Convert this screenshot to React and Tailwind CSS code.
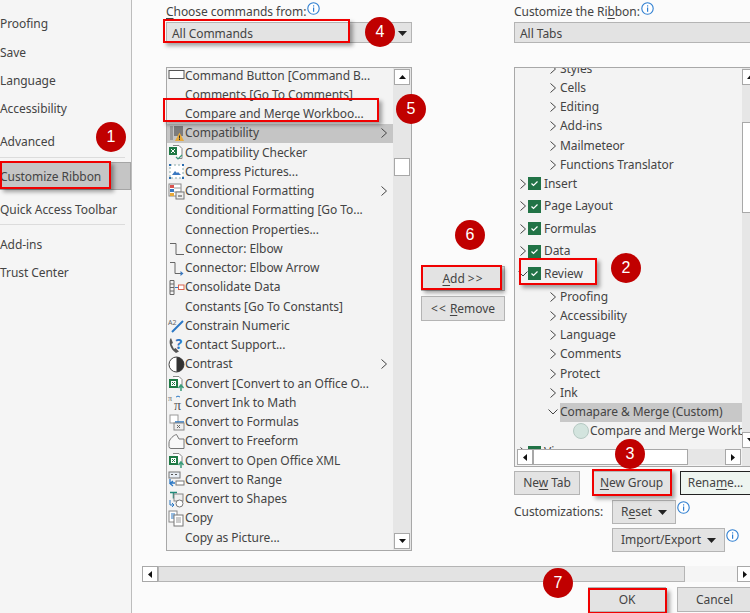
import React from "react";

const font = { fontFamily: '"Noto Sans", "Open Sans", sans-serif' };

const U = ({ children }) => <span className="underline underline-offset-2">{children}</span>;

const Ic = ({ children }) => (
  <svg width="17" height="17" viewBox="0 0 17 17" fill="none" className="shrink-0 overflow-visible">{children}</svg>
);

const icons = {
  button: <Ic><rect x="1" y="3.500" width="15" height="8" fill="#fff" stroke="#555" /></Ic>,
  compat: <Ic><rect x="2" y="1" width="3" height="14" fill="#9a9a9a" /><rect x="6" y="1" width="9" height="10" fill="#7c7c7c" /><path d="M11.500 7.500l4.500 8.500H7z" fill="#e8a93a" /><rect x="11" y="10.500" width="1" height="3" fill="#333" /><rect x="11" y="14" width="1" height="1" fill="#333" /></Ic>,
  checker: <Ic><path d="M5 1.500h6l3 3v10h-3" stroke="#888" fill="#fff" /><rect x="1" y="3" width="8" height="8" fill="#1f7a45" /><path d="M3 5l4 4M7 5l-4 4" stroke="#fff" /><path d="M8 13l2 2 4-4" stroke="#3a9a78" strokeWidth="1.200" /></Ic>,
  compress: <Ic><rect x="2" y="2" width="13" height="13" fill="#fff" stroke="#8aa" strokeDasharray="2 2" /><path d="M4 12l3-4 2 2 1-1 3 3z" fill="#3a78c0" /><rect x="1" y="1" width="2" height="2" fill="#2b6cb0" /><rect x="14" y="1" width="2" height="2" fill="#2b6cb0" /><rect x="1" y="14" width="2" height="2" fill="#2b6cb0" /><rect x="14" y="14" width="2" height="2" fill="#2b6cb0" /></Ic>,
  cond: <Ic><rect x="1" y="1" width="12" height="12" fill="#fff" stroke="#888" /><rect x="2" y="2" width="4" height="3" fill="#d9534f" /><rect x="2" y="6" width="4" height="3" fill="#3a78c0" /><rect x="2" y="10" width="4" height="3" fill="#e8a93a" /><path d="M6 5h7M6 9h7" stroke="#999" /><rect x="8" y="9" width="8" height="7" fill="#eee" stroke="#777" /><path d="M10 13h4" stroke="#444" /></Ic>,
  elbow: <Ic><path d="M2 3.500h6v11h8" stroke="#666" /></Ic>,
  elbowArrow: <Ic><path d="M2 2.500h5v11h7" stroke="#666" /><path d="M12.500 11l3 2.500-3 2.500z" fill="#3a78c0" /></Ic>,
  consol: <Ic><path d="M2 1.500h4v14h-4zM2 5h4M2 8.500h4M2 12h4" stroke="#666" /><path d="M7 8.500h3" stroke="#3a78c0" /><rect x="10.500" y="6" width="5.500" height="4.500" fill="#fff" stroke="#d9634f" /></Ic>,
  numeric: <Ic><text x="0" y="8" fontSize="7" fill="#666" style={font}>A2</text><path d="M4 15L15 4" stroke="#2b78c5" strokeWidth="2" /></Ic>,
  contact: <Ic><path d="M3 1C0 4 2 12 8 16l3-1.500-3.500-3.500-1.500 1-2.500-5 1.500-1z" fill="#555" /><text x="7.500" y="11.500" fontSize="14" fill="#2b78c5" fontWeight="700" style={font}>?</text></Ic>,
  contrast: <Ic><circle cx="8.500" cy="8.500" r="7.500" fill="#fff" stroke="#444" /><path d="M8.500 1a7.500 7.500 0 010 15z" fill="#333" /></Ic>,
  convert: <Ic><path d="M5 1.500h6l3 3v6" stroke="#888" fill="#fff" /><rect x="1" y="4" width="9" height="9" fill="#1f7a45" /><rect x="3" y="6" width="5" height="5" fill="#fff" /><path d="M4 7l3 3M7 7l-3 3" stroke="#1f7a45" /><path d="M13 16v-5M10.500 13l2.500-3 2.500 3" stroke="#3a9a78" strokeWidth="1.500" /></Ic>,
  ink: <Ic><text x="0" y="7" fontSize="8" fill="#666" style={{ fontFamily: '"Liberation Serif", serif' }}>π</text><text x="6" y="15.500" fontSize="14" fill="#555" style={{ fontFamily: '"Liberation Serif", serif' }}>π</text><path d="M8 3a3 3 0 014 0" stroke="#2b78c5" /></Ic>,
  formulas: <Ic><rect x="2" y="1" width="8" height="8" fill="#fff" stroke="#999" /><path d="M7 8h9" stroke="#2b78c5" strokeWidth="1.500" /><rect x="6" y="9" width="10" height="7" fill="#eee" stroke="#888" /><path d="M9 11l3 3M12 11l-3 3" stroke="#666" /></Ic>,
  freeform: <Ic><path d="M3 15.500H16V6H11L8.500 1.500C6 2 1 6 1 10V13.500Q1 15.500 3 15.500z" fill="#f8f8f8" stroke="#777" /></Ic>,
  range: <Ic><rect x="1" y="1" width="11" height="6" fill="#e8eef5" stroke="#777" /><path d="M3 3.500h2M7 3.500h2" stroke="#555" /><path d="M2 8v4h5M5 10l-3 2.500 3 2.500" stroke="#2b78c5" strokeWidth="1.300" /><rect x="8" y="10" width="8" height="4" fill="#fff" stroke="#777" /></Ic>,
  shapes: <Ic><path d="M2 1.500h7M5.500 1.500v6" stroke="#1f8a7a" strokeWidth="1.500" /><rect x="6" y="3" width="9" height="7" fill="#eee" stroke="#888" /><circle cx="11.500" cy="12.500" r="3.500" fill="#fff" stroke="#777" /><path d="M2 9v5h4M4 12l2 2-2 2" stroke="#2b78c5" /></Ic>,
  copy: <Ic><rect x="1" y="1" width="8" height="11" fill="#fff" stroke="#888" /><path d="M3 4h4M3 6h4M3 8h4" stroke="#2b78c5" /><rect x="6" y="5" width="9" height="11" fill="#fff" stroke="#777" /><path d="M8 8h5M8 10h5M8 12h5" stroke="#999" /></Ic>,
};

const commands = [
  ["button", "Command Button [Command B..."],
  [null, "Comments [Go To Comments]"],
  [null, "Compare and Merge Workboo..."],
  ["compat", "Compatibility", true, true],
  ["checker", "Compatibility Checker"],
  ["compress", "Compress Pictures..."],
  ["cond", "Conditional Formatting", true],
  [null, "Conditional Formatting [Go To..."],
  [null, "Connection Properties..."],
  ["elbow", "Connector: Elbow"],
  ["elbowArrow", "Connector: Elbow Arrow"],
  ["consol", "Consolidate Data"],
  [null, "Constants [Go To Constants]"],
  ["numeric", "Constrain Numeric"],
  ["contact", "Contact Support..."],
  ["contrast", "Contrast", true],
  ["convert", "Convert [Convert to an Office O..."],
  ["ink", "Convert Ink to Math"],
  ["formulas", "Convert to Formulas"],
  ["freeform", "Convert to Freeform"],
  ["convert", "Convert to Open Office XML"],
  ["range", "Convert to Range"],
  ["shapes", "Convert to Shapes"],
  ["copy", "Copy"],
  [null, "Copy as Picture..."],
];

const Chevron = ({ down }) => (
  <svg width="10" height="12" viewBox="0 0 10 12" fill="none" className="shrink-0">
    <path d={down ? "M0.500 3.500l4.500 4.500 4.500-4.500" : "M2.500 1.500l5 4.500-5 4.500"} stroke="#444" strokeWidth="1" />
  </svg>
);

const Arrow = ({ dir }) => {
  const d = { up: "M1 6l3.500-4 3.500 4z", down: "M1 2l3.500 4 3.500-4z", left: "M6 1L2 4.500 6 8z", right: "M2 1l4 3.500L2 8z" }[dir];
  return <svg width="9" height="9" viewBox="0 0 9 9" className="shrink-0"><path d={d} fill="#111" /></svg>;
};

const ScrollBtn = ({ dir, className = "" }) => (
  <div className={`w-[16px] h-[16px] bg-white border border-[#a8a8a8] flex items-center justify-center shrink-0 ${className}`}>
    <Arrow dir={dir} />
  </div>
);

const Info = ({ className = "" }) => (
  <svg width="13" height="13" viewBox="0 0 13 13" fill="none" className={`shrink-0 ${className}`}>
    <circle cx="6.500" cy="6.500" r="5.700" stroke="#2f7fd1" strokeWidth="1.100" fill="#fff" />
    <rect x="6" y="5.500" width="1.200" height="4.300" fill="#2f7fd1" />
    <rect x="6" y="3.300" width="1.200" height="1.200" fill="#2f7fd1" />
  </svg>
);

const Check = () => (
  <span className="w-[13px] h-[13px] bg-[#217346] flex items-center justify-center shrink-0">
    <svg width="9" height="9" viewBox="0 0 9 9" fill="none"><path d="M1.500 4.500l2 2 4-4" stroke="#fff" strokeWidth="1.200" /></svg>
  </span>
);

const Btn = ({ className = "", children }) => (
  <div className={`bg-[#e3e3e3] border border-[#b4b4b4] flex items-center justify-center text-[#444] ${className}`}>{children}</div>
);

const Caret = () => <svg width="9" height="5" viewBox="0 0 9 5" className="shrink-0"><path d="M0 0h9L4.500 5z" fill="#222" /></svg>;

const Level2 = ({ label, className = "" }) => (
  <div className={`h-[19.250px] flex items-center pl-[33px] gap-[2px] shrink-0 ${className}`}>
    <Chevron />
    <span>{label}</span>
  </div>
);

const Level1 = ({ label, down, className = "" }) => (
  <div className={`h-[22.500px] flex items-center pl-[3px] shrink-0 ${className}`}>
    <Chevron down={down} />
    <Check />
    <span className="ml-[3px]">{label}</span>
  </div>
);

const RedBox = ({ className }) => (
  <div className={`absolute border-2 border-[#f00000] shadow-[3px_3px_4px_rgba(0,0,0,0.35)] ${className}`} />
);

const Badge = ({ n, className }) => (
  <div className={`absolute w-[30px] h-[30px] rounded-full bg-[#c00000] text-white text-[16px] flex items-center justify-center ${className}`} style={{ fontFamily: '"Liberation Sans", sans-serif' }}>{n}</div>
);

const SideItem = ({ label, className = "" }) => (
  <div className={`flex items-center shrink-0 whitespace-nowrap ${className}`}>{label}</div>
);

export default function App() {
  return (
    <div className="relative w-[750px] h-[613px] overflow-hidden bg-[#fbfbfb] flex text-[12px] tracking-[-0.06px] text-[#444]" style={font}>
      {/* Sidebar */}
      <div className="w-[132px] shrink-0 h-full bg-[#f5f5f5] border-r border-[#bdbdbd] flex flex-col pt-[10px]">
        <SideItem label="Proofing" className="h-[28px]" />
        <SideItem label="Save" className="h-[29px]" />
        <SideItem label="Language" className="h-[28px]" />
        <SideItem label="Accessibility" className="h-[28px]" />
        <SideItem label="Advanced" className="h-[30px] mt-[4px]" />
        <div className="h-px bg-[#dcdcdc] w-[125px]" />
        <SideItem label="Customize Ribbon" className="h-[28px] mt-[4px] pt-[2px] bg-[#c5c5c5] border-y border-r border-[#a5a5a5]" />
        <SideItem label="Quick Access Toolbar" className="h-[28px] mt-[6px]" />
        <div className="h-px bg-[#dcdcdc] w-[125px]" />
        <SideItem label="Add-ins" className="h-[28px] mt-[6px]" />
        <SideItem label="Trust Center" className="h-[28px]" />
      </div>

      {/* Main */}
      <div className="flex-1 min-w-0 h-full flex flex-col pl-[10px]">
        <div className="flex pl-[24px] gap-[9px] h-[552px] shrink-0 pt-[2px]">
          {/* Commands column */}
          <div className="w-[246px] shrink-0 flex flex-col">
            <div className="h-[19px] flex items-center gap-[1px] whitespace-nowrap">
              <span><U>C</U>hoose commands from:</span><Info className="-mt-[6px]" />
            </div>
            <div className="h-[21px] mt-[1px] pt-[2px] bg-[#e3e3e3] border border-[#b4b4b4] flex items-center justify-between pl-[5px] pr-[4px] shrink-0">
              <span>All Commands</span><Caret />
            </div>
            <div className="mt-[24px] h-[484px] border border-[#a8a8a8] bg-[#f3f3f3] flex overflow-hidden">
              <div className="flex-1 min-w-0 flex flex-col -mt-[2px]">
                {commands.map(([ic, label, sub, sel]) => (
                  <div key={label} className={`h-[19.250px] shrink-0 flex items-center whitespace-nowrap pr-[4px] ${sel ? "bg-[#c5c5c5]" : ""}`}>
                    <span className="w-[18px] shrink-0 flex justify-center">{ic ? icons[ic] : null}</span>
                    <span className="flex-1">{label}</span>
                    {sub ? <Chevron /> : null}
                  </div>
                ))}
              </div>
              <div className="w-[18px] shrink-0 bg-[#e6e6e6] flex flex-col items-center pt-[1px] pb-[1px]">
                <ScrollBtn dir="up" />
                <div className="w-[16px] h-[18px] bg-white border border-[#a8a8a8] mt-[73px]" />
                <ScrollBtn dir="down" className="mt-auto" />
              </div>
            </div>
          </div>

          {/* Add / Remove */}
          <div className="w-[84px] shrink-0 flex flex-col pt-[264px]">
            <Btn className="h-[25px]"><span><U>A</U>dd <span className="tracking-[1px]">&gt;&gt;</span></span></Btn>
            <Btn className="h-[25px] mt-[5px]"><span><span className="tracking-[1px]">&lt;&lt;</span> <U>R</U>emove</span></Btn>
          </div>

          {/* Ribbon column */}
          <div className="w-[250px] shrink-0 flex flex-col">
            <div className="h-[19px] flex items-center gap-[1px] whitespace-nowrap">
              <span>Customize the Ri<U>b</U>bon:</span><Info className="-mt-[6px]" />
            </div>
            <div className="h-[21px] mt-[1px] pt-[2px] bg-[#e3e3e3] border border-[#b4b4b4] flex items-center pl-[5px] shrink-0">All Tabs</div>
            <div className="mt-[24px] h-[400px] border border-[#a8a8a8] bg-[#f3f3f3] flex overflow-hidden shrink-0 relative">
              <div className="w-[227px] shrink-0 flex flex-col overflow-hidden -mt-[9px] whitespace-nowrap">
                <Level2 label="Styles" />
                <Level2 label="Cells" />
                <Level2 label="Editing" />
                <Level2 label="Add-ins" />
                <Level2 label="Mailmeteor" />
                <Level2 label="Functions Translator" />
                <Level1 label="Insert" className="-mt-[1.850px]" />
                <Level1 label="Page Layout" />
                <Level1 label="Formulas" />
                <Level1 label="Data" />
                <Level1 label="Review" down />
                <Level2 label="Proofing" className="mt-[1.900px]" />
                <Level2 label="Accessibility" />
                <Level2 label="Language" />
                <Level2 label="Comments" />
                <Level2 label="Protect" />
                <Level2 label="Ink" />
                <div className="h-[19.250px] flex items-center pl-[33px] shrink-0">
                  <Chevron down />
                  <span className="ml-[2px] bg-[#c8c8c8] flex-1 h-full flex items-center">Comapare &amp; Merge (Custom)</span>
                </div>
                <div className="h-[19.250px] flex items-center pl-[58px] shrink-0 overflow-hidden">
                  <span className="w-[16px] h-[16px] rounded-full bg-[#d3e4de] border border-[#b6c9c3] shrink-0" />
                  <span className="ml-[1px]">Compare and Merge Workbook</span>
                </div>
                <Level1 label="View" />
              </div>
              <div className="flex-1 bg-[#e6e6e6] flex flex-col pt-[1px]">
                <ScrollBtn dir="up" />
                <div className="w-[16px] h-[91px] bg-white border border-[#a8a8a8] mt-[37px]" />
                <ScrollBtn dir="down" className="mt-[219px]" />
              </div>
              <div className="absolute left-[2px] bottom-[1px] w-[224px] h-[16px] flex bg-[#e6e6e6]">
                <ScrollBtn dir="left" />
                <div className="w-[155px] h-full bg-white border border-[#a8a8a8]" />
                <div className="flex-1" />
                <ScrollBtn dir="right" />
              </div>
            </div>

            <div className="flex mt-[4px] h-[24px] shrink-0">
              <Btn className="w-[66px]"><span>Ne<U>w</U> Tab</span></Btn>
              <Btn className="w-[79px] ml-[12px]"><span><U>N</U>ew Group</span></Btn>
              <Btn className="w-[71px] ml-[9px] !bg-[#eef5f0] !border-[#222]"><span>Rena<U>m</U>e...</span></Btn>
            </div>
            <div className="flex mt-[5px] h-[24px] shrink-0">
              <div className="w-[98px] flex items-center">Customizations:</div>
              <Btn className="w-[64px] gap-[6px]"><span>R<U>e</U>set</span><Caret /></Btn>
              <Info className="ml-[1px] mt-[1px]" />
            </div>
            <div className="flex mt-[4px] h-[24px] shrink-0 pl-[98px]">
              <Btn className="w-[113px] gap-[6px]"><span>Im<U>p</U>ort/Export</span><Caret /></Btn>
              <Info className="ml-[1px] mt-[1px]" />
            </div>
          </div>
        </div>

        {/* Bottom scrollbar */}
        <div className="h-[16px] mt-[14px] -mr-[3px] flex bg-[#f5f5f5] shrink-0">
          <ScrollBtn dir="left" />
          <div className="w-[527px] bg-[#e3e3e3] border border-[#b4b4b4]" />
          <div className="flex-1" />
          <ScrollBtn dir="right" />
        </div>

        {/* Footer */}
        <div className="flex justify-end gap-[11px] mt-[5px] -mr-[2px] shrink-0">
          <Btn className="w-[78px] h-[25px]">OK</Btn>
          <Btn className="w-[75px] h-[25px]">Cancel</Btn>
        </div>
      </div>

      {/* Annotations */}
      <RedBox className="left-0 top-[161px] w-[111px] h-[28px]" />
      <RedBox className="left-[163px] top-[19px] w-[187px] h-[24px]" />
      <RedBox className="left-[163px] top-[98px] w-[216px] h-[24px]" />
      <RedBox className="left-[519px] top-[258px] w-[78px] h-[27px]" />
      <RedBox className="left-[421px] top-[265px] w-[81px] h-[25px]" />
      <RedBox className="left-[592px] top-[469px] w-[80px] h-[27px]" />
      <RedBox className="left-[588px] top-[588px] w-[79px] h-[26px]" />
      <Badge n="1" className="left-[96px] top-[122px]" />
      <Badge n="4" className="left-[365px] top-[17px]" />
      <Badge n="5" className="left-[396px] top-[94px]" />
      <Badge n="6" className="left-[455px] top-[220px]" />
      <Badge n="2" className="left-[611px] top-[253px]" />
      <Badge n="3" className="left-[615px] top-[439px]" />
      <Badge n="7" className="left-[543px] top-[568px]" />
    </div>
  );
}
